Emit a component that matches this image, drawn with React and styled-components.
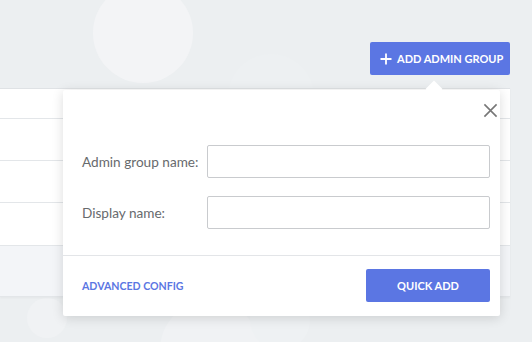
import React from "react";
import styled, { createGlobalStyle } from "styled-components";

const GlobalStyle = createGlobalStyle`
  html, body {
    margin: 0;
    padding: 0;
    background: #eceff1;
    font-family: "Lato", "Open Sans", sans-serif;
    overflow: hidden;
  }
`;

const rows = [30, 42, 42, 43, 51];

function App() {
  return (
    <>
      <GlobalStyle />
      <Page>
        <Bubble size={100} left={93} top={-17} tone="#f3f4f6" />
        <Bubble size={86} left={228} top={54} tone="#edf0f2" />
        <Bubble size={40} left={27} top={298} tone="#f0f2f4" />
        <Bubble size={100} left={160} top={300} tone="#f0f2f4" />
        <Bubble size={60} left={250} top={290} tone="#eef1f3" />
        <Toolbar>
          <AddButton>
            <PlusIcon viewBox="0 0 12 12">
              <path d="M6 0.5v11M0.5 6h11" stroke="#fff" strokeWidth="1.8" />
            </PlusIcon>
            Add admin group
          </AddButton>
        </Toolbar>
        <Table>
          {rows.map((h, i) => (
            <Row key={i} height={h} highlighted={i === rows.length - 1} />
          ))}
        </Table>
        <Popover>
          <Arrow />
          <CloseButton aria-label="close">
            <svg width="15" height="15" viewBox="0 0 16 16">
              <path d="M1.5 1.5l13 13M14.5 1.5l-13 13" stroke="#777" strokeWidth="1.7" />
            </svg>
          </CloseButton>
          <Form>
            <Field>
              <Label>Admin group name:</Label>
              <Input />
            </Field>
            <Field>
              <Label>Display name:</Label>
              <Input />
            </Field>
          </Form>
          <Footer>
            <LinkButton>Advanced config</LinkButton>
            <PrimaryButton>Quick add</PrimaryButton>
          </Footer>
        </Popover>
      </Page>
    </>
  );
}

const Page = styled.div`
  position: relative;
  width: 532px;
  height: 342px;
  overflow: hidden;
`;

const Bubble = styled.div`
  position: absolute;
  left: ${(p) => p.left}px;
  top: ${(p) => p.top}px;
  width: ${(p) => p.size}px;
  height: ${(p) => p.size}px;
  border-radius: 50%;
  background: ${(p) => p.tone};
`;

const Toolbar = styled.div`
  position: relative;
  display: flex;
  justify-content: flex-end;
  padding: 42px 22px 13px 0;
`;

const AddButton = styled.button`
  display: flex;
  align-items: center;
  gap: 5px;
  height: 33px;
  width: 140px;
  padding: 0 0 0 10px;
  border: 0;
  border-radius: 2px;
  background: #5b76e3;
  color: #fff;
  font-family: inherit;
  font-weight: 700;
  font-size: 11px;
  letter-spacing: 0;
  text-transform: uppercase;
`;

const PlusIcon = styled.svg`
  width: 12px;
  height: 12px;
`;

const Table = styled.div`
  position: relative;
  width: 510px;
  background: #fff;
  border-top: 1px solid #dfe2e5;
  box-shadow: 0 1px 2px rgba(0, 0, 0, 0.04);
`;

const Row = styled.div`
  height: ${(p) => p.height}px;
  box-sizing: border-box;
  border-bottom: 1px solid #e3e6e9;
  background: ${(p) => (p.highlighted ? "#f3f5f8" : "#fff")};
`;

const Popover = styled.div`
  position: absolute;
  left: 63px;
  top: 90px;
  width: 437px;
  background: #fff;
  border-radius: 2px;
  box-shadow: 0 2px 12px rgba(0, 0, 0, 0.14);
`;

const Arrow = styled.div`
  position: absolute;
  top: -7px;
  right: 60px;
  width: 12px;
  height: 12px;
  background: #fff;
  transform: rotate(45deg);
`;

const CloseButton = styled.button`
  position: absolute;
  top: 10px;
  right: 0;
  width: 20px;
  height: 20px;
  padding: 0;
  border: 0;
  background: transparent;
  display: flex;
  align-items: center;
  justify-content: center;
`;

const Form = styled.div`
  display: flex;
  flex-direction: column;
  gap: 18px;
  padding: 55px 10px 26px 19px;
  border-bottom: 1px solid #e3e5e8;
`;

const Field = styled.div`
  display: flex;
  align-items: center;
`;

const Label = styled.label`
  width: 125px;
  font-size: 13.6px;
  color: #676a6d;
`;

const Input = styled.input`
  width: 283px;
  height: 33px;
  box-sizing: border-box;
  border: 1px solid #c9cbce;
  border-radius: 2px;
  outline: none;
`;

const Footer = styled.div`
  display: flex;
  align-items: center;
  justify-content: space-between;
  padding: 13px 10px 14px 19px;
`;

const LinkButton = styled.button`
  padding: 0;
  border: 0;
  background: transparent;
  color: #5b76e3;
  font-family: inherit;
  font-weight: 700;
  font-size: 10.6px;
  text-transform: uppercase;
`;

const PrimaryButton = styled.button`
  width: 124px;
  height: 33px;
  border: 0;
  border-radius: 2px;
  background: #5b76e3;
  color: #fff;
  font-family: inherit;
  font-weight: 700;
  font-size: 11px;
  text-transform: uppercase;
`;

export default App;
